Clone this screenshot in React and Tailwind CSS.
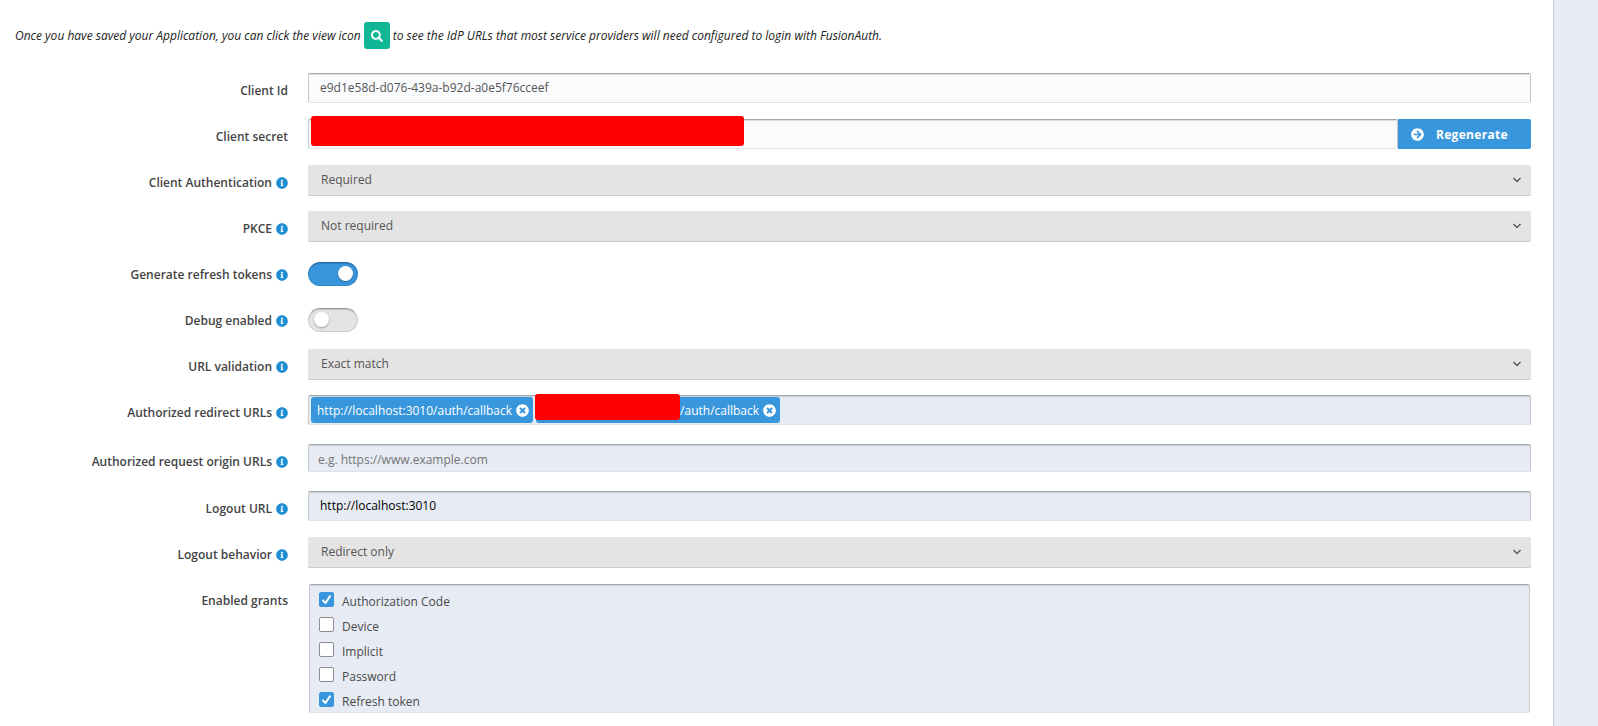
import { useState } from 'react';
import { FaArrowCircleRight, FaInfoCircle, FaSearch, FaTimesCircle } from 'react-icons/fa';

const inputStyle =
  'block w-full rounded-xs border border-t-[#a5a9ae] border-x-[#c6cacf] border-b-[#dfe3e8] shadow-[inset_0_1px_1px_rgba(0,0,0,0.12)] focus:outline-none';

// Label on the left, control on the right
function Row({ label, id, info, children }) {
  return (
    <div className="grid grid-cols-[273px_1fr] gap-5 mb-4">
      <label
        htmlFor={id}
        className="flex h-[30px] items-center justify-end gap-1 pt-1.5 text-[12px] font-semibold text-[#444]"
      >
        {label}
        {info && <FaInfoCircle className="mb-px size-3 text-[#1e8fd2]" />}
      </label>
      <div className="min-h-[30px]">{children}</div>
    </div>
  );
}

function Select({ id, options }) {
  return (
    <div className="relative -mb-px">
      <select
        id={id}
        className="block h-[31px] w-full appearance-none rounded-xs border-b border-[#cacaca] bg-[#e4e4e4] px-[13px] text-[12px] text-[#555] focus:outline-none"
      >
        {options.map((option) => (
          <option key={option}>{option}</option>
        ))}
      </select>
      <svg
        viewBox="0 0 8 6"
        className="pointer-events-none absolute top-3 right-2.5 h-1.5 w-2 fill-none stroke-[#555]"
      >
        <path d="M0.5 1L4 4.5L7.5 1" strokeWidth="1.3" />
      </svg>
    </div>
  );
}

function Toggle({ id, defaultChecked }) {
  return (
    <input
      id={id}
      type="checkbox"
      role="switch"
      defaultChecked={defaultChecked}
      className="mt-[5px] flex h-6 w-[50px] appearance-none items-center rounded-full border border-[#ccc] border-t-[#999] bg-[#e4e4e4] px-[5px] pb-px shadow-[inset_0_1px_1px_rgba(0,0,0,0.15)] before:size-[15px] before:rounded-full before:bg-white before:shadow-[0_1px_2px_rgba(0,0,0,0.3)] checked:justify-end checked:border-[#3488c5] checked:border-t-[#27679a] checked:bg-[#3897dc] checked:pr-1"
    />
  );
}

function Tag({ children, onRemove }) {
  return (
    <span className="relative flex h-[26px] items-center gap-1 rounded-[3px] bg-[#3897dc] pr-1 pl-1.5 text-[12px] text-white">
      {children}
      <button type="button" aria-label="Remove" onClick={onRemove}>
        <FaTimesCircle className="size-[13px]" />
      </button>
    </span>
  );
}

function Grant({ name, defaultChecked }) {
  return (
    <label className="flex items-start gap-2 text-[12px] text-[#4a4a4a]">
      <span className="relative size-[15px]">
        <input
          type="checkbox"
          defaultChecked={defaultChecked}
          className="peer block size-[15px] appearance-none rounded-xs border border-[#8d8f93] bg-white checked:border-[#3897dc] checked:bg-[#3897dc]"
        />
        <svg
          viewBox="0 0 15 15"
          className="pointer-events-none absolute inset-0 hidden fill-none stroke-white peer-checked:block"
        >
          <path d="M3.5 8L6.5 11L11.5 3.5" strokeWidth="2" />
        </svg>
      </span>
      <span className="pt-[3px] leading-[13px]">{name}</span>
    </label>
  );
}

export default function App() {
  const [tags, setTags] = useState(['local', 'remote']);
  const removeTag = (tag) => setTags(tags.filter((t) => t !== tag));

  return (
    <div className="flex min-h-screen bg-[#e7ebf3] font-['Open_Sans','Noto_Sans',sans-serif]">
      <main className="mr-[44px] flex-1 border-r border-[#c9cdd2] bg-white pt-[22px] pr-[22px] pl-[15px]">
        <p className="mb-6 flex h-[27px] items-center gap-[3px] text-[12px] text-[#222] italic">
          Once you have saved your Application, you can click the view icon
          <span className="flex h-[27px] w-[26px] items-center justify-center rounded-[3px] bg-[#10b797] text-white">
            <FaSearch className="size-3" />
          </span>
          to see the IdP URLs that most service providers will need configured to login with FusionAuth.
        </p>

        <form>
          <Row label="Client Id" id="clientId">
            <input
              id="clientId"
              readOnly
              defaultValue="e9d1e58d-d076-439a-b92d-a0e5f76cceef"
              className={`${inputStyle} h-[30px] bg-[#fafbfd] px-[11px] pb-0.5 text-[12px] text-[#555]`}
            />
          </Row>

          <Row label="Client secret" id="clientSecret">
            <div className="relative flex">
              <input
                id="clientSecret"
                readOnly
                className={`${inputStyle} h-[30px] flex-1 bg-[#fafbfd] px-[11px] text-[12px]`}
              />
              <span className="absolute -top-[3px] left-[3px] h-[30px] w-[433px] rounded-[3px] bg-[#ff0000]" />
              <button
                type="button"
                className="flex h-[30px] w-[133px] items-center gap-3 rounded-r-xs bg-[#3897dc] pl-[13px] text-[12px] font-bold tracking-wide text-white"
              >
                <FaArrowCircleRight className="size-[13px]" />
                <span className="pt-0.5">Regenerate</span>
              </button>
            </div>
          </Row>

          <Row label="Client Authentication" id="clientAuthentication" info>
            <Select id="clientAuthentication" options={['Required', 'Not required']} />
          </Row>

          <Row label="PKCE" id="pkce" info>
            <Select id="pkce" options={['Not required', 'Required']} />
          </Row>

          <Row label="Generate refresh tokens" id="refreshTokens" info>
            <Toggle id="refreshTokens" defaultChecked />
          </Row>

          <Row label="Debug enabled" id="debug" info>
            <Toggle id="debug" />
          </Row>

          <Row label="URL validation" id="urlValidation" info>
            <Select id="urlValidation" options={['Exact match', 'Allow wildcards']} />
          </Row>

          <Row label="Authorized redirect URLs" id="redirectUrls" info>
            <div className="mb-[3px] flex h-[30px] gap-[3px] rounded-xs border border-x-[#c6cacf] border-t-[#a5a9ae] border-b-[#dfe3e8] bg-[#e7ebf3] px-0.5 pt-px shadow-[inset_0_1px_1px_rgba(0,0,0,0.12)]">
              {tags.includes('local') && (
                <Tag onRemove={() => removeTag('local')}>
                  <span className="pt-px">http://localhost:3010/auth/callback</span>
                </Tag>
              )}
              {tags.includes('remote') && (
                <Tag onRemove={() => removeTag('remote')}>
                  <span className="absolute -top-[3px] -left-px h-[26px] w-[145px] rounded-[3px] bg-[#ff0000]" />
                  <span className="pt-px pl-[138px]">/auth/callback</span>
                </Tag>
              )}
              <input id="redirectUrls" className="flex-1 bg-transparent focus:outline-none" />
            </div>
          </Row>

          <Row label="Authorized request origin URLs" id="originUrls" info>
            <input
              id="originUrls"
              placeholder="e.g. https://www.example.com"
              className={`${inputStyle} mb-[3px] h-7 bg-[#e7ebf3] px-[9px] pt-0.5 text-[12px] placeholder:text-[#757575]`}
            />
          </Row>

          <Row label="Logout URL" id="logoutUrl" info>
            <input
              id="logoutUrl"
              defaultValue="http://localhost:3010"
              className={`${inputStyle} h-[30px] bg-[#e7ebf3] px-[11px] pb-0.5 text-[12px] text-black`}
            />
          </Row>

          <Row label="Logout behavior" id="logoutBehavior" info>
            <Select id="logoutBehavior" options={['Redirect only', 'All applications']} />
          </Row>

          <Row label="Enabled grants" id="grants">
            <div
              id="grants"
              className="mx-px mt-px flex h-[129px] flex-col justify-between rounded-xs border border-x-[#c6cacf] border-t-[#a5a9ae] border-b-[#dfe3e8] bg-[#e7ebf3] px-[9px] pt-[7px] pb-1 shadow-[inset_0_1px_1px_rgba(0,0,0,0.12)]"
            >
              <Grant name="Authorization Code" defaultChecked />
              <Grant name="Device" />
              <Grant name="Implicit" />
              <Grant name="Password" />
              <Grant name="Refresh token" defaultChecked />
            </div>
          </Row>
        </form>
      </main>
    </div>
  );
}
